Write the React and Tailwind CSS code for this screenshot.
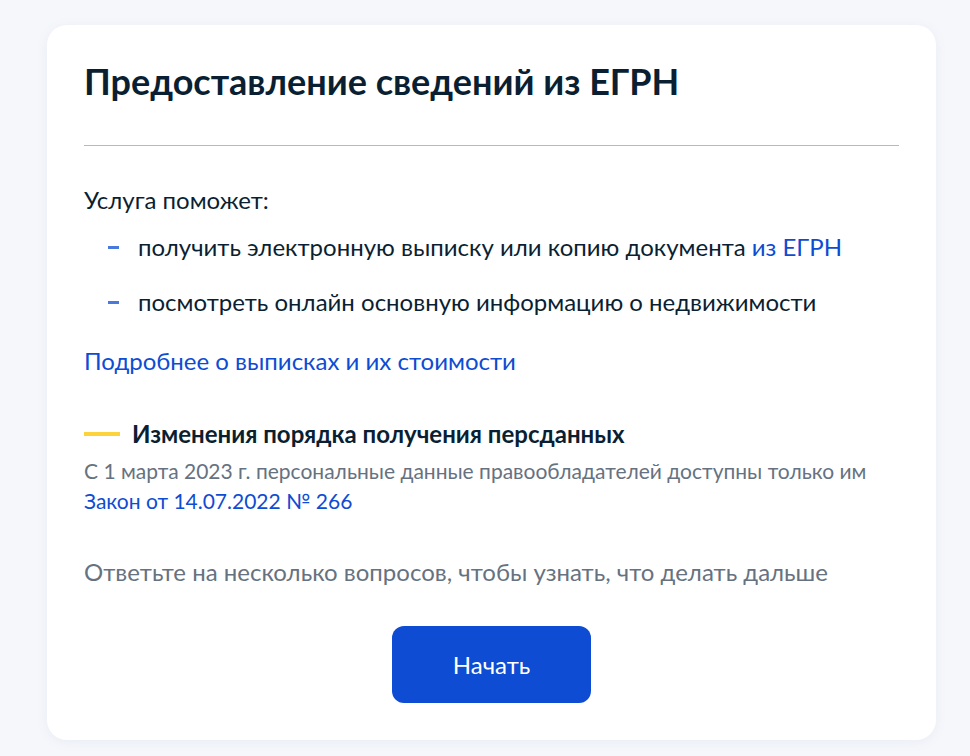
export default function App() {
  return (
    <div className="min-h-screen bg-[#f5f7fb] pt-[25px] pl-[47px] pr-[34px] pb-4 font-['Lato',sans-serif]">
      <div className="bg-white rounded-[20px] shadow-[0_2px_12px_rgba(102,119,168,0.08)] px-[37px] pt-[34px] pb-[37px]">
        <h1 className="text-[36px] leading-[44px] font-bold text-[#0b1f33]">
          Предоставление сведений из ЕГРН
        </h1>
        <div className="mt-[42px] h-px bg-[#a9bbd6]" />

        <p className="mt-[40px] text-[24px] leading-[28px] text-[#0b1f33]">Услуга поможет:</p>
        <ul className="mt-[19px] flex flex-col gap-[27px] text-[24px] leading-[28px] text-[#0b1f33]">
          <li className="flex items-center">
            <span className="ml-[24px] mr-[19px] w-[11px] h-[3px] bg-[#0d4cd3] opacity-75" />
            <span>
              получить электронную выписку или копию документа{' '}
              <a href="#" className="text-[#0d4cd3]">из ЕГРН</a>
            </span>
          </li>
          <li className="flex items-center">
            <span className="ml-[24px] mr-[19px] w-[11px] h-[3px] bg-[#0d4cd3] opacity-75" />
            <span>посмотреть онлайн основную информацию о недвижимости</span>
          </li>
        </ul>

        <a href="#" className="block mt-[31px] text-[24px] leading-[28px] text-[#0d4cd3]">
          Подробнее о выписках и их стоимости
        </a>

        <div className="mt-[45px] flex items-center">
          <span className="w-[36px] h-[4px] bg-[#fcd33a] mr-[12px]" />
          <h2 className="text-[24px] leading-[28px] font-bold text-[#0b1f33]">
            Изменения порядка получения персданных
          </h2>
        </div>
        <p className="mt-[8px] text-[21px] leading-[30px] text-[#66727f]">
          С 1 марта 2023 г. персональные данные правообладателей доступны только им
        </p>
        <a href="#" className="block text-[21px] leading-[30px] text-[#0d4cd3]">
          Закон от 14.07.2022 № 266
        </a>

        <p className="mt-[42px] text-[24px] leading-[28px] text-[#66727f]">
          Ответьте на несколько вопросов, чтобы узнать, что делать дальше
        </p>

        <div className="mt-[40px] flex justify-center">
          <button className="w-[199px] h-[77px] rounded-[12px] bg-[#0d4cd3] text-white text-[24px]">
            Начать
          </button>
        </div>
      </div>
    </div>
  );
}
